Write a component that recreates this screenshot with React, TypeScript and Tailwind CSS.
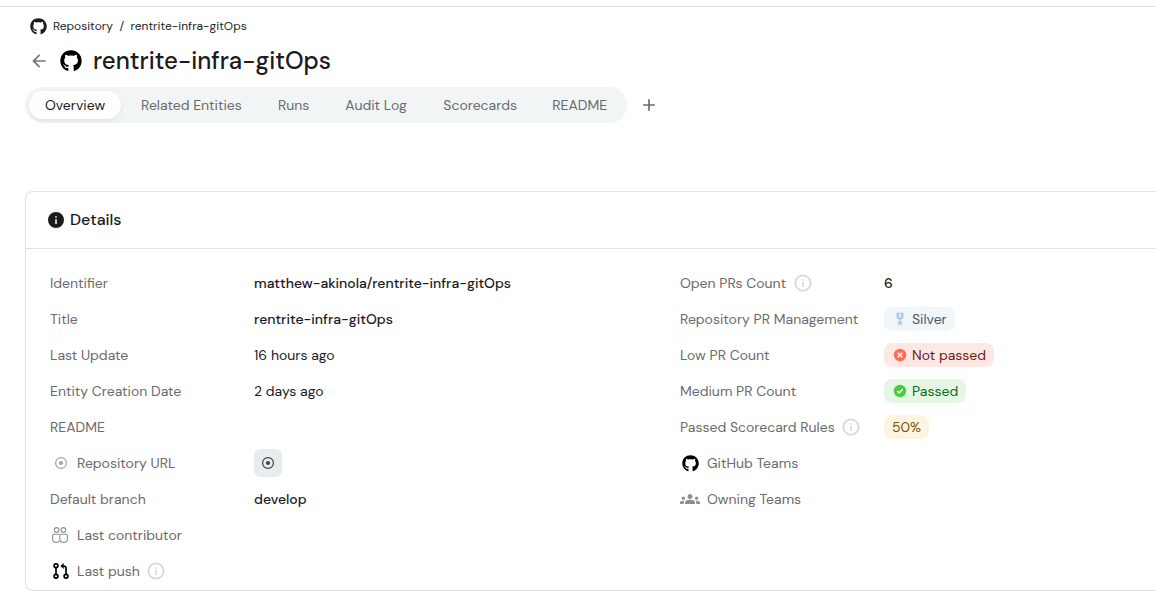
import React from "react";
import { FaGithub } from "react-icons/fa";
import { MdArrowBack, MdGroups, MdAdd } from "react-icons/md";

const InfoIcon = () => (
  <svg viewBox="0 0 18 18" className="ml-[7.5px] h-[18px] w-[18px] shrink-0 text-[#d8d8d8]" fill="none" stroke="currentColor">
    <circle cx="9" cy="9" r="7.700" strokeWidth="1.700" />
    <path d="M9 8v4.800" strokeWidth="1.700" />
    <path d="M9 5.200v1.500" strokeWidth="1.700" />
  </svg>
);

const DetailsIcon = () => (
  <svg viewBox="0 0 16 16" className="mr-[6px] h-4 w-4 shrink-0">
    <circle cx="8" cy="8" r="8" fill="currentColor" />
    <path d="M8 7.200V12M8 4.200v1.600" stroke="#fff" strokeWidth="1.500" />
  </svg>
);

const TargetIcon = ({ className }: { className: string }) => (
  <svg viewBox="0 0 12 12" className={`h-3 w-3 shrink-0 ${className}`}>
    <circle cx="6" cy="6" r="5.400" fill="none" stroke="currentColor" strokeWidth="1.200" />
    <circle cx="6" cy="6" r="2.100" fill="currentColor" />
  </svg>
);

const PeopleIcon = () => (
  <svg viewBox="0 0 16 16" className="h-4 w-4 shrink-0 text-[#8f8f8f]" fill="none" stroke="currentColor" strokeWidth="1.100">
    <circle cx="4.600" cy="2.900" r="2.300" />
    <circle cx="11.400" cy="2.900" r="2.300" />
    <path d="M7.400 7.300H2.200C1.200 7.300.6 8 .6 8.900v2.800c0 2.200 1.600 3.700 3.600 3.700 1.400 0 2.600-.6 3.200-1.700" />
    <path d="M9.100 7.300h4.700c1 0 1.600.7 1.600 1.600v2.800c0 2.200-1.700 3.700-3.800 3.700s-3.800-1.500-3.800-3.700V8.600c0-.8.5-1.300 1.300-1.300Z" />
  </svg>
);

const PullRequestIcon = () => (
  <svg viewBox="0 0 16 16" className="ml-px h-4 w-4 shrink-0 text-black" fill="none" stroke="currentColor" strokeWidth="1.700">
    <circle cx="3" cy="2.800" r="1.900" />
    <circle cx="3" cy="13.200" r="1.900" />
    <circle cx="13" cy="13.200" r="1.900" />
    <path d="M3 4.700v6.600M13 11.300V5.400c0-1.500-.9-2.400-2.400-2.400H9" />
    <path d="M10.700 0v6L7.300 3Z" fill="currentColor" stroke="none" />
  </svg>
);

const MedalIcon = () => (
  <svg viewBox="0 0 12 14" className="h-[14px] w-3 shrink-0 text-[#adc9df]" fill="currentColor">
    <path fillRule="evenodd" d="M2.500.8h7v4.800c0 .5-.2.8-.6 1L6.600 7.900H5.400L3.100 6.600c-.4-.2-.6-.5-.6-1ZM5.300 1.800v4h1.400v-4Z" />
    <path d="M5.400 7h1.200v1.400H5.400Z" />
    <path d="m6 7.800.9 1.900h2.500l-1.900 1.500.8 2.500L6 12.300l-2.300 1.400.8-2.500-1.900-1.500h2.500Z" />
  </svg>
);

const CrossIcon = () => (
  <svg viewBox="0 0 14 14" className="h-3.5 w-3.5 shrink-0">
    <circle cx="7" cy="7" r="6.200" fill="#ff6c54" />
    <path d="m4.700 4.700 4.600 4.600m0-4.600L4.700 9.300" stroke="#fff" strokeWidth="1.400" />
  </svg>
);

const CheckIcon = () => (
  <svg viewBox="0 0 14 14" className="h-3.5 w-3.5 shrink-0">
    <circle cx="7" cy="7" r="6.200" fill="#4ccb3f" />
    <path d="m4.200 7.100 1.900 1.900 3.700-3.800" fill="none" stroke="#fff" strokeWidth="1.400" />
  </svg>
);

const Row = ({ label, icon, info, children }: {
  label: string;
  icon?: React.ReactNode;
  info?: boolean;
  children?: React.ReactNode;
}) => (
  <div className="flex h-9 items-center text-sm whitespace-nowrap">
    <div className="flex w-[204px] shrink-0 items-center text-[#6b6b6b]">
      {icon && <span className="mr-[7px] flex w-5 shrink-0 items-center justify-center">{icon}</span>}
      <span>{label}</span>
      {info && <InfoIcon />}
    </div>
    {children}
  </div>
);

const tabs = [
  { label: "Overview", box: "w-[60px]" },
  { label: "Related Entities", box: "w-[101px]" },
  { label: "Runs", box: "w-[31.300px]" },
  { label: "Audit Log", box: "w-[62px]" },
  { label: "Scorecards", box: "w-[73px]" },
  { label: "README", box: "w-[55px]" },
];

export default function App() {
  return (
    <div className="h-[599px] w-full overflow-hidden bg-white pt-1.5 font-['DM_Sans','Inter',sans-serif] text-[#1b1b1d]">
      <header className="border-t border-[#e1e1e1] pl-[25px]">
        <nav className="mt-[9px] flex h-5 items-center pl-[5px] text-xs whitespace-nowrap">
          <FaGithub className="mr-[6px] h-[17px] w-[17px]" />
          <span className="w-[60px]">Repository</span>
          <span className="mr-[7px] ml-[6.500px] w-1">/</span>
          <span>rentrite-infra-gitOps</span>
        </nav>
        <div className="mt-[9px] flex h-8 items-center pl-[4px] whitespace-nowrap">
          <MdArrowBack className="h-5 w-5 text-[#757575]" />
          <FaGithub className="mr-[11px] ml-[11px] h-[22px] w-[22px] text-black" />
          <h1 className="text-2xl font-medium">rentrite-infra-gitOps</h1>
        </div>
        <div className="mt-[10px] flex items-center">
          <div className="flex h-9 items-center gap-1 rounded-full bg-[#f1f5f6] px-1">
            {tabs.map((tab, i) => (
              <button
                key={tab.label}
                className={`h-7 rounded-full px-4 text-sm whitespace-nowrap ${i === 0 ? "bg-white text-[#1b1b1d] shadow-[0_2px_4px_rgba(0,0,0,0.08)]" : "text-[#6b6b6b]"}`}
              >
                <span className={`block text-left ${tab.box}`}>{tab.label}</span>
              </button>
            ))}
          </div>
          <MdAdd className="ml-[12px] h-5 w-5 text-[#6b6b6b]" />
        </div>
      </header>

      <section className="mt-[68px] ml-[25px] h-[400px] rounded-l-lg border border-r-0 border-[#e1e1e1]">
        <div className="flex h-[57px] items-center border-b border-[#e1e1e1] pl-[22px]">
          <DetailsIcon />
          <h2 className="text-base font-medium">Details</h2>
        </div>
        <div className="flex pt-4 pl-6">
          <div className="w-[630px] shrink-0">
            <Row label="Identifier"><span className="font-medium">matthew-akinola/rentrite-infra-gitOps</span></Row>
            <Row label="Title"><span className="font-medium">rentrite-infra-gitOps</span></Row>
            <Row label="Last Update">16 hours ago</Row>
            <Row label="Entity Creation Date">2 days ago</Row>
            <Row label="README" />
            <Row label="Repository URL" icon={<TargetIcon className="ml-px text-[#a5a5a5]" />}>
              <span className="flex h-7 w-7 items-center justify-center rounded-md bg-[#e7ecef]">
                <TargetIcon className="text-[#3f4244]" />
              </span>
            </Row>
            <Row label="Default branch"><span className="font-medium">develop</span></Row>
            <Row label="Last contributor" icon={<PeopleIcon />} />
            <Row label="Last push" icon={<PullRequestIcon />} info />
          </div>
          <div>
            <Row label="Open PRs Count" info><span className="font-medium">6</span></Row>
            <Row label="Repository PR Management">
              <span className="flex h-6 w-[71px] items-center gap-[6px] rounded-lg bg-[#f1f6fa] pl-[10px] text-[#4a5968]"><MedalIcon />Silver</span>
            </Row>
            <Row label="Low PR Count">
              <span className="flex h-6 w-[110px] items-center gap-[5px] rounded-lg bg-[#ffe8e4] pl-[9px] text-[#6b1b12]"><CrossIcon />Not passed</span>
            </Row>
            <Row label="Medium PR Count">
              <span className="flex h-6 w-[82px] items-center gap-[5px] rounded-lg bg-[#e5f7e4] pl-[9px] text-[#0d6b1c]"><CheckIcon />Passed</span>
            </Row>
            <Row label="Passed Scorecard Rules" info>
              <span className="flex h-6 w-[45px] items-center rounded-lg bg-[#fff4e0] pl-2 text-[#7a5600]">50%</span>
            </Row>
            <Row label="GitHub Teams" icon={<FaGithub className="ml-px h-[17px] w-[17px] text-black" />} />
            <Row label="Owning Teams" icon={<MdGroups className="h-5 w-5 text-[#8e8e8e]" />} />
          </div>
        </div>
      </section>
    </div>
  );
}
